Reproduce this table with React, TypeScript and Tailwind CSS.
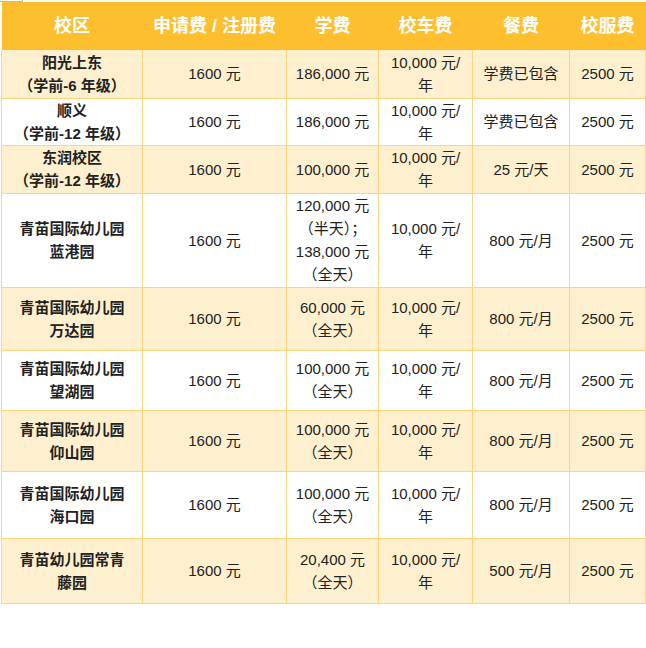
const font = { fontFamily: '"Liberation Sans", "Noto Sans CJK SC", sans-serif' };

type Row = {
  campus: string[];
  apply: string;
  tuition: string[];
  bus: string[];
  meal: string;
  uniform: string;
  h: string;
};

const rows: Row[] = [
  { campus: ["阳光上东", "（学前-6 年级）"], apply: "1600 元", tuition: ["186,000 元"], bus: ["10,000 元/", "年"], meal: "学费已包含", uniform: "2500 元", h: "h-[48px]" },
  { campus: ["顺义", "（学前-12 年级）"], apply: "1600 元", tuition: ["186,000 元"], bus: ["10,000 元/", "年"], meal: "学费已包含", uniform: "2500 元", h: "h-[47px]" },
  { campus: ["东润校区", "（学前-12 年级）"], apply: "1600 元", tuition: ["100,000 元"], bus: ["10,000 元/", "年"], meal: "25 元/天", uniform: "2500 元", h: "h-[48px]" },
  { campus: ["青苗国际幼儿园", "蓝港园"], apply: "1600 元", tuition: ["120,000 元", "（半天）；", "138,000 元", "（全天）"], bus: ["10,000 元/", "年"], meal: "800 元/月", uniform: "2500 元", h: "h-[94px]" },
  { campus: ["青苗国际幼儿园", "万达园"], apply: "1600 元", tuition: ["60,000 元", "（全天）"], bus: ["10,000 元/", "年"], meal: "800 元/月", uniform: "2500 元", h: "h-[63px]" },
  { campus: ["青苗国际幼儿园", "望湖园"], apply: "1600 元", tuition: ["100,000 元", "（全天）"], bus: ["10,000 元/", "年"], meal: "800 元/月", uniform: "2500 元", h: "h-[60px]" },
  { campus: ["青苗国际幼儿园", "仰山园"], apply: "1600 元", tuition: ["100,000 元", "（全天）"], bus: ["10,000 元/", "年"], meal: "800 元/月", uniform: "2500 元", h: "h-[61px]" },
  { campus: ["青苗国际幼儿园", "海口园"], apply: "1600 元", tuition: ["100,000 元", "（全天）"], bus: ["10,000 元/", "年"], meal: "800 元/月", uniform: "2500 元", h: "h-[67px]" },
  { campus: ["青苗幼儿园常青", "藤园"], apply: "1600 元", tuition: ["20,400 元", "（全天）"], bus: ["10,000 元/", "年"], meal: "500 元/月", uniform: "2500 元", h: "h-[65px]" },
];

function Lines({ items }: { items: string[] }) {
  return (
    <>
      {items.map((t, i) => (
        <div key={i} className="whitespace-nowrap">{t}</div>
      ))}
    </>
  );
}

const cell = "border-r border-b border-[#f9d67c] text-center align-middle p-0";

export default function App() {
  return (
    <div className="relative w-[646px] h-[648px] bg-white" style={font}>
      <div className="absolute left-0 top-0 w-[23px] h-[2px] border-b border-r border-[#b9b9b9]" />
      <div className="pl-[1px] pt-[2px]">
        <table className="table-fixed border-collapse w-[644px] text-[15px] leading-[23px] text-[#222]">
          <colgroup>
            <col className="w-[141px]" />
            <col className="w-[144px]" />
            <col className="w-[92px]" />
            <col className="w-[94px]" />
            <col className="w-[97px]" />
            <col className="w-[76px]" />
          </colgroup>
          <thead>
            <tr className="h-[48px] bg-[#fdbf2e] text-white font-bold text-[18px]">
              <th className="p-0 text-center">校区</th>
              <th className="p-0 text-center">申请费 / 注册费</th>
              <th className="p-0 text-center">学费</th>
              <th className="p-0 text-center">校车费</th>
              <th className="p-0 text-center">餐费</th>
              <th className="p-0 text-center">校服费</th>
            </tr>
          </thead>
          <tbody>
            {rows.map((r, i) => (
              <tr key={i} className={`${r.h} ${i % 2 === 0 ? "bg-[#fef0ce]" : "bg-white"}`}>
                <td className={`${cell} border-l font-bold`}><Lines items={r.campus} /></td>
                <td className={cell}>{r.apply}</td>
                <td className={cell}><Lines items={r.tuition} /></td>
                <td className={cell}><Lines items={r.bus} /></td>
                <td className={cell}>{r.meal}</td>
                <td className={cell}>{r.uniform}</td>
              </tr>
            ))}
          </tbody>
        </table>
      </div>
    </div>
  );
}
